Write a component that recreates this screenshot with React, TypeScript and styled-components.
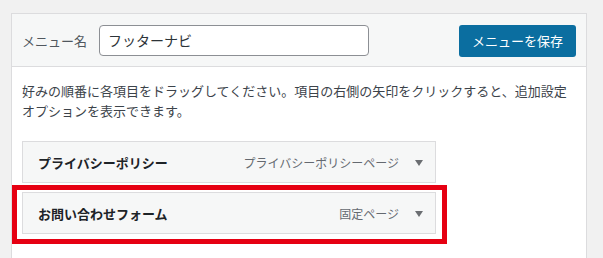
import React from "react";
import styled, { createGlobalStyle } from "styled-components";

const Global = createGlobalStyle`
  html, body { margin: 0; padding: 0; background: #f1f1f1; }
  body { font-family: "Noto Sans CJK JP", "Noto Sans", sans-serif; font-size: 13px; color: #3c434a; }
`;

const Page = styled.div`
  padding: 13px 16px 0 11px;
  height: 258px;
  box-sizing: border-box;
  overflow: hidden;
`;

const Panel = styled.div`
  border: 1px solid #dcdcde;
  background: #fff;
  height: 260px;
`;

const Header = styled.div`
  display: flex;
  align-items: center;
  justify-content: space-between;
  height: 52px;
  padding: 0 10px;
  background: #f6f7f7;
  border-bottom: 1px solid #dcdcde;
`;

const NameGroup = styled.div`
  display: flex;
  align-items: center;
  gap: 12px;
`;

const Label = styled.label`
  font-size: 13px;
  color: #50575e;
`;

const NameInput = styled.div`
  width: 270px;
  height: 31px;
  box-sizing: border-box;
  border: 1px solid #8c8f94;
  border-radius: 4px;
  background: #fff;
  display: flex;
  align-items: center;
  padding: 0 8px;
  font-size: 14px;
  color: #2c3338;
`;

const SaveButton = styled.button`
  width: 117px;
  height: 32px;
  border: none;
  border-radius: 3px;
  background: #0b6ea0;
  color: #fff;
  font-family: inherit;
  font-size: 13px;
  padding: 0;
  margin-top: 1px;
`;

const Body = styled.div`
  padding: 14px 10px 0;
`;

const Help = styled.p`
  margin: 0 0 20px;
  line-height: 20px;
  font-size: 13px;
  color: #3c434a;
`;

const ItemList = styled.div`
  display: flex;
  flex-direction: column;
  gap: 9px;
  width: 414px;
`;

const Item = styled.div`
  position: relative;
  height: 42px;
  box-sizing: border-box;
  border: 1px solid #dcdcde;
  background: #f6f7f7;
  display: flex;
  align-items: center;
  padding: 0 12px 0 15px;
`;

const Title = styled.span`
  flex: 1;
  font-weight: bold;
  font-size: 13px;
  color: #1d2327;
`;

const Type = styled.span`
  font-size: 12px;
  color: #646970;
  margin-right: 16px;
`;

const Arrow = styled.span`
  width: 0;
  height: 0;
  border-left: 4px solid transparent;
  border-right: 4px solid transparent;
  border-top: 6px solid #6b6e72;
  margin-top: 1px;
`;

const Highlight = styled.div`
  position: absolute;
  top: -8px;
  left: -11px;
  right: -12px;
  bottom: -11px;
  border: 5px solid #e60012;
  pointer-events: none;
`;

const items = [
  { title: "プライバシーポリシー", type: "プライバシーポリシーページ", hl: false },
  { title: "お問い合わせフォーム", type: "固定ページ", hl: true },
];

export default function App() {
  return (
    <>
      <Global />
      <Page>
        <Panel>
          <Header>
            <NameGroup>
              <Label>メニュー名</Label>
              <NameInput>フッターナビ</NameInput>
            </NameGroup>
            <SaveButton>メニューを保存</SaveButton>
          </Header>
          <Body>
            <Help>
              好みの順番に各項目をドラッグしてください。項目の右側の矢印をクリックすると、追加設定オプションを表示できます。
            </Help>
            <ItemList>
              {items.map((it) => (
                <Item key={it.title}>
                  <Title>{it.title}</Title>
                  <Type>{it.type}</Type>
                  <Arrow />
                  {it.hl && <Highlight />}
                </Item>
              ))}
            </ItemList>
          </Body>
        </Panel>
      </Page>
    </>
  );
}
